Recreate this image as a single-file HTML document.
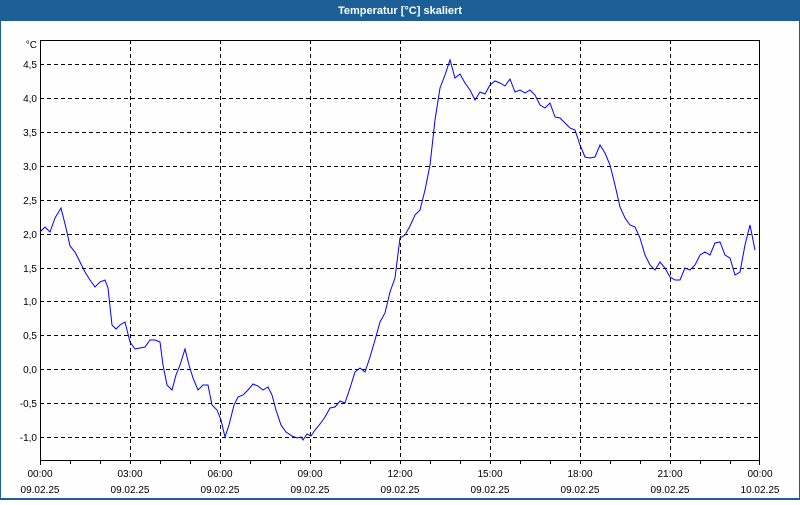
<!DOCTYPE html>
<html><head><meta charset="utf-8"><style>
html,body{margin:0;padding:0;background:#fff;}
body{width:800px;height:500px;overflow:hidden;font-family:"Liberation Sans","DejaVu Sans",sans-serif;}
</style></head><body>
<svg width="800" height="500" xmlns="http://www.w3.org/2000/svg" font-family="Liberation Sans, DejaVu Sans, sans-serif">
<rect x="0" y="0" width="800" height="500" fill="#1c5f96"/>
<rect x="1" y="21" width="798" height="477" fill="#fdfefd"/>
<text x="400" y="14" fill="#fff" font-size="11" font-weight="bold" text-anchor="middle">Temperatur [°C] skaliert</text>
<g stroke="#000" stroke-width="1" stroke-dasharray="4,3" fill="none">
<path d="M40 64.5H760M40 98.5H760M40 132.5H760M40 166.5H760M40 200.5H760M40 234.5H760M40 268.5H760M40 301.5H760M40 335.5H760M40 369.5H760M40 403.5H760M40 437.5H760"/>
<path d="M130.5 40V461M220.5 40V461M310.5 40V461M400.5 40V461M490.5 40V461M580.5 40V461M670.5 40V461"/>
</g>
<rect x="40.5" y="40.5" width="719" height="420" fill="none" stroke="#000"/>
<g stroke="#000">
<path d="M40.5 461v4M70.5 461v3M100.5 461v3M130.5 461v3M160.5 461v3M190.5 461v3M220.5 461v3M250.5 461v3M280.5 461v3M310.5 461v3M340.5 461v3M370.5 461v3M400.5 461v3M430.5 461v3M460.5 461v3M490.5 461v3M520.5 461v3M550.5 461v3M580.5 461v3M610.5 461v3M640.5 461v3M670.5 461v3M700.5 461v3M730.5 461v3M759.5 461v4"/>
</g>
<g font-size="10" fill="#000" text-anchor="end">
<text x="37" y="48">°C</text>
<text x="37" y="68">4,5</text><text x="37" y="102">4,0</text><text x="37" y="136">3,5</text><text x="37" y="170">3,0</text><text x="37" y="204">2,5</text><text x="37" y="238">2,0</text><text x="37" y="272">1,5</text><text x="37" y="305">1,0</text><text x="37" y="339">0,5</text><text x="37" y="373">0,0</text><text x="37" y="407">-0,5</text><text x="37" y="441">-1,0</text>
</g>
<g font-size="10" fill="#000" text-anchor="middle">
<text x="40" y="477">00:00</text><text x="40" y="493">09.02.25</text>
<text x="130" y="477">03:00</text><text x="130" y="493">09.02.25</text>
<text x="220" y="477">06:00</text><text x="220" y="493">09.02.25</text>
<text x="310" y="477">09:00</text><text x="310" y="493">09.02.25</text>
<text x="400" y="477">12:00</text><text x="400" y="493">09.02.25</text>
<text x="490" y="477">15:00</text><text x="490" y="493">09.02.25</text>
<text x="580" y="477">18:00</text><text x="580" y="493">09.02.25</text>
<text x="670" y="477">21:00</text><text x="670" y="493">09.02.25</text>
<text x="760" y="477">00:00</text><text x="760" y="493">10.02.25</text>
</g>
<polyline fill="none" stroke="#0000ff" stroke-width="1" points="40,232 45,227 50,232 55,218 61,208 66,228 70,246 75,252 80,262 85,272 90,280 95,287 100,282 105,280 108,288 112,325 116,329 120,325 125,322 130,342 135,349 140,348 145,347 150,340 155,340 160,342 163,365 167,385 172,390 176,375 180,365 185,349 189,365 193,378 198,390 203,385 208,385 212,405 217,410 221,420 225,437 229,425 234,405 238,397 243,395 248,390 253,384 258,386 263,390 268,387 272,395 276,410 281,425 286,432 292,436 297,438 301,437 303,440 307,434 311,436 315,430 320,424 325,417 330,408 335,407 340,401 345,403 350,388 355,372 360,368 365,372 370,357 375,340 380,322 385,313 390,292 395,278 400,238 405,235 410,226 415,215 420,210 425,190 430,165 435,120 440,88 445,75 450,60 455,78 460,74 465,83 470,90 475,100 480,92 485,94 490,85 495,81 500,83 505,86 510,79 515,92 520,90 525,93 530,90 535,95 540,105 545,108 550,103 555,117 560,118 565,123 570,128 575,130 580,145 585,157 590,158 595,157 600,145 605,153 610,165 615,185 620,207 625,218 630,225 635,227 640,238 645,255 650,265 655,270 660,262 665,268 670,277 675,280 680,280 685,268 690,270 695,265 700,255 705,252 710,255 715,243 720,242 725,255 730,258 735,275 740,272 745,245 750,225 755,250"/>
</svg>
</body></html>
